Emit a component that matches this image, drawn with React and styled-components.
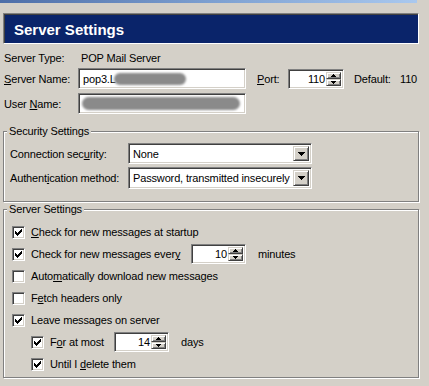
import styled, { createGlobalStyle } from "styled-components"

const GlobalStyle = createGlobalStyle`
    body {
        margin: 0;
        background: #d4d0c8;
        font-family: "Liberation Sans", Arial, sans-serif;
        font-size: 11px;
        letter-spacing: -0.15px;
        color: #000;
    }
`

const sunken = `
    box-sizing: border-box;
    background: #fff;
    border-top: 1px solid #808080;
    border-left: 1px solid #808080;
    border-bottom: 1px solid #fff;
    border-right: 1px solid #fff;
    box-shadow: inset 1px 1px 0 #404040, inset -1px -1px 0 #d4d0c8;
`

const raised = `
    box-sizing: border-box;
    background: #d4d0c8;
    border-top: 1px solid #d4d0c8;
    border-left: 1px solid #d4d0c8;
    border-bottom: 1px solid #404040;
    border-right: 1px solid #404040;
    box-shadow: inset 1px 1px 0 #fff, inset -1px -1px 0 #808080;
`

function Mn({ children }) {
    return <U>{children}</U>
}

function Check({ checked }) {
    return (
        <CheckBox>
            {checked && (
                <svg width="7" height="7" viewBox="0 0 7 7" shapeRendering="crispEdges">
                    <path d="M6 0h1v3h-1zM5 1h1v3h-1zM4 2h1v3h-1zM3 3h1v3h-1zM2 4h1v3h-1zM1 3h1v3h-1zM0 2h1v3h-1z" fill="#000" />
                </svg>
            )}
        </CheckBox>
    )
}

function Spinner({ value, width }) {
    return (
        <SpinBox $width={width}>
            <SpinValue>{value}</SpinValue>
            <SpinButtons>
                <SpinButton>
                    <svg width="5" height="3" viewBox="0 0 5 3" shapeRendering="crispEdges">
                        <path d="M2 0h1v1h-1zM1 1h3v1h-3zM0 2h5v1h-5z" fill="#000" />
                    </svg>
                </SpinButton>
                <SpinButton>
                    <svg width="5" height="3" viewBox="0 0 5 3" shapeRendering="crispEdges">
                        <path d="M0 0h5v1h-5zM1 1h3v1h-3zM2 2h1v1h-1z" fill="#000" />
                    </svg>
                </SpinButton>
            </SpinButtons>
        </SpinBox>
    )
}

function Select({ value }) {
    return (
        <SelectBox>
            <SelectValue>{value}</SelectValue>
            <DropButton>
                <svg width="7" height="4" viewBox="0 0 7 4" shapeRendering="crispEdges">
                    <path d="M0 0h7v1h-7zM1 1h5v1h-5zM2 2h3v1h-3zM3 3h1v1h-1z" fill="#000" />
                </svg>
            </DropButton>
        </SelectBox>
    )
}

export default function App() {
    return (
        <Page>
            <GlobalStyle />
            <TopStrip />
            <Header>Server Settings</Header>

            <Form>
                <Row $h={14}>
                    <Label $w={77}>Server Type:</Label>
                    <span>POP Mail Server</span>
                </Row>
                <Row $h={21} $gap={3}>
                    <Label $w={74}>
                        <Mn>S</Mn>erver Name:
                    </Label>
                    <TextField>
                        pop3.L
                        <Blur $w={72} $h={12} $ml={-2} />
                    </TextField>
                    <Label $w={31} $ml={11}>
                        <Mn>P</Mn>ort:
                    </Label>
                    <Spinner value="110" width={56} />
                    <Label $w={46} $ml={10}>Default:</Label>
                    <span>110</span>
                </Row>
                <Row $h={21} $gap={4}>
                    <Label $w={74}>
                        User <Mn>N</Mn>ame:
                    </Label>
                    <TextField>
                        <Blur $w={158} $h={13} $ml={-1} />
                    </TextField>
                </Row>
            </Form>

            <Group $mt={11}>
                <Legend>Security Settings</Legend>
                <GroupBody $gap={3} $pl={6}>
                    <Row $h={21}>
                        <Label $w={118}>
                            Connection sec<Mn>u</Mn>rity:
                        </Label>
                        <Select value="None" />
                    </Row>
                    <Row $h={22}>
                        <Label $w={118}>
                            Authent<Mn>i</Mn>cation method:
                        </Label>
                        <Select value="Password, transmitted insecurely" />
                    </Row>
                </GroupBody>
            </Group>

            <Group $mt={1} $pt={5} $pb={2}>
                <Legend>Server Settings</Legend>
                <GroupBody $pl={8}>
                    <OptionRow>
                        <Check checked />
                        <OptionText>
                            <Mn>C</Mn>heck for new messages at startup
                        </OptionText>
                    </OptionRow>
                    <OptionRow>
                        <Check checked />
                        <OptionText $w={148}>
                            Check for new messages ever<Mn>y</Mn>
                        </OptionText>
                        <Gap $w={12} />
                        <Spinner value="10" width={55} />
                        <Gap $w={12} />
                        <span>minutes</span>
                    </OptionRow>
                    <OptionRow>
                        <Check />
                        <OptionText>
                            Auto<Mn>m</Mn>atically download new messages
                        </OptionText>
                    </OptionRow>
                    <OptionRow>
                        <Check />
                        <OptionText>
                            F<Mn>e</Mn>tch headers only
                        </OptionText>
                    </OptionRow>
                    <OptionRow>
                        <Check checked />
                        <OptionText>Leave messages on server</OptionText>
                    </OptionRow>
                    <OptionRow $indent>
                        <Check checked />
                        <OptionText $w={64}>
                            F<Mn>o</Mn>r at most
                        </OptionText>
                        <Spinner value="14" width={55} />
                        <Gap $w={12} />
                        <span>days</span>
                    </OptionRow>
                    <OptionRow $indent>
                        <Check checked />
                        <OptionText>
                            Until I <Mn>d</Mn>elete them
                        </OptionText>
                    </OptionRow>
                </GroupBody>
            </Group>
        </Page>
    )
}

const Page = styled.div`
    width: 429px;
    height: 386px;
    overflow: hidden;
    background: #d4d0c8;
`

const TopStrip = styled.div`
    height: 3px;
    margin-right: 12px;
    background: linear-gradient(to right, #4d6ea8, #7c9fd0 50%, #a9c8ee);
`

const Header = styled.div`
    box-sizing: border-box;
    display: flex;
    align-items: center;
    height: 31px;
    margin: 10px 10px 0 3px;
    padding: 1px 0 0 10px;
    background: #0a246a;
    border-top: 1px solid #808080;
    border-left: 1px solid #808080;
    border-bottom: 1px solid #fff;
    border-right: 1px solid #fff;
    box-shadow: inset 1px 1px 0 #404040;
    color: #fff;
    font-size: 15px;
    font-weight: bold;
    letter-spacing: 0;
`

const Form = styled.div`
    display: flex;
    flex-direction: column;
    margin-top: 7px;
    padding-left: 4px;
`

const Row = styled.div`
    display: flex;
    align-items: center;
    height: ${(p) => p.$h}px;
    margin-top: ${(p) => p.$gap || 0}px;
    white-space: nowrap;
`

const Label = styled.span`
    flex: none;
    width: ${(p) => p.$w}px;
    margin-left: ${(p) => p.$ml || 0}px;
`

const U = styled.span`
    text-decoration: underline;
`

const TextField = styled.div`
    ${sunken}
    display: flex;
    align-items: center;
    width: 168px;
    height: 21px;
    padding: 0 0 0 4px;
    overflow: hidden;
`

const Blur = styled.span`
    display: inline-block;
    width: ${(p) => p.$w}px;
    height: ${(p) => p.$h}px;
    margin-left: ${(p) => p.$ml || 0}px;
    border-radius: 7px;
    background: #8a8a8a;
    filter: blur(1.2px);
`

const SpinBox = styled.div`
    ${sunken}
    flex: none;
    display: flex;
    align-items: stretch;
    width: ${(p) => p.$width}px;
    height: 20px;
    padding: 2px 2px 2px 2px;
`

const SpinValue = styled.span`
    flex: 1;
    display: flex;
    align-items: center;
    justify-content: flex-end;
    padding-right: 1px;
`

const SpinButtons = styled.div`
    display: flex;
    flex-direction: column;
    width: 15px;
`

const SpinButton = styled.div`
    ${raised}
    flex: 1;
    display: flex;
    align-items: center;
    justify-content: center;
`

const SelectBox = styled.div`
    ${sunken}
    display: flex;
    align-items: stretch;
    width: 184px;
    height: 100%;
    padding: 2px;
`

const SelectValue = styled.span`
    flex: 1;
    display: flex;
    align-items: center;
    padding-left: 2px;
    overflow: hidden;
    white-space: nowrap;
`

const DropButton = styled.div`
    ${raised}
    flex: none;
    display: flex;
    align-items: center;
    justify-content: center;
    width: 16px;
`

const Group = styled.fieldset`
    margin: ${(p) => p.$mt}px 10px 0 3px;
    padding: ${(p) => p.$pt ?? 5}px 0 ${(p) => p.$pb ?? 12}px 0;
    border: 1px solid #808080;
    box-shadow: 1px 1px 0 #fff, inset 1px 1px 0 #fff;
    min-width: 0;
`

const Legend = styled.legend`
    margin-left: 3px;
    padding: 0 2px 0 2px;
    background: #d4d0c8;
    line-height: 13px;
`

const GroupBody = styled.div`
    display: flex;
    flex-direction: column;
    gap: ${(p) => p.$gap || 0}px;
    padding-left: ${(p) => p.$pl}px;
`

const OptionRow = styled.div`
    display: flex;
    align-items: center;
    height: 22px;
    padding-left: ${(p) => (p.$indent ? 19 : 0)}px;
    white-space: nowrap;
`

const CheckBox = styled.div`
    ${sunken}
    flex: none;
    display: flex;
    align-items: center;
    justify-content: center;
    width: 13px;
    height: 13px;
`

const OptionText = styled.span`
    flex: none;
    margin-left: 6px;
    width: ${(p) => (p.$w ? `${p.$w}px` : "auto")};
`

const Gap = styled.span`
    flex: none;
    width: ${(p) => p.$w}px;
`
